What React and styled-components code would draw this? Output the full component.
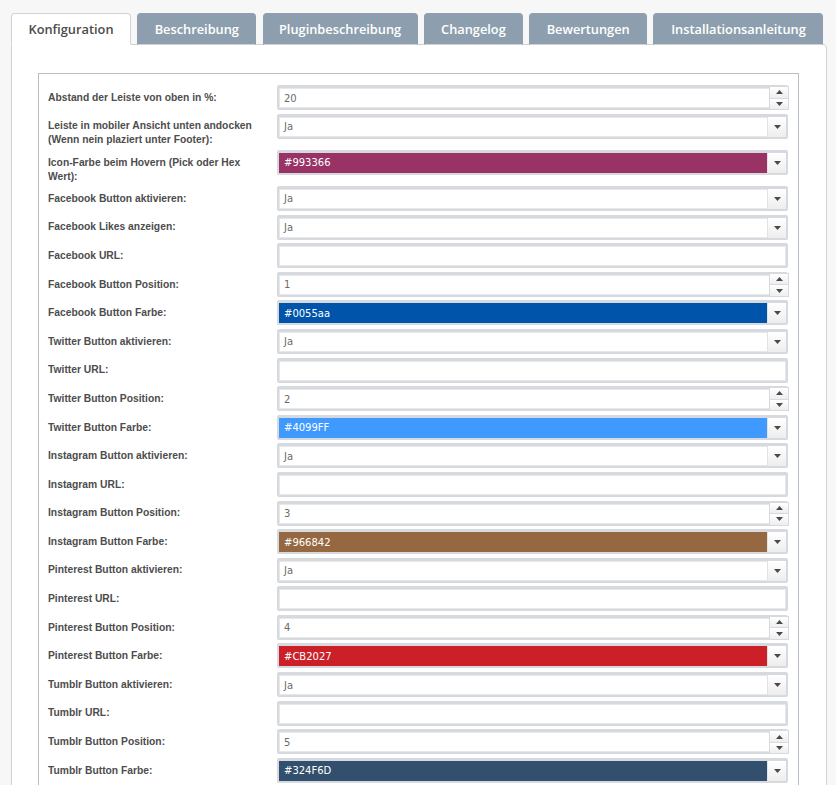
import React from 'react';
import styled, { createGlobalStyle } from 'styled-components';

const tabs = [
	{ name: 'Konfiguration', width: 120 },
	{ name: 'Beschreibung', width: 119 },
	{ name: 'Pluginbeschreibung', width: 155 },
	{ name: 'Changelog', width: 99 },
	{ name: 'Bewertungen', width: 118 },
	{ name: 'Installationsanleitung', width: 170 },
];

const rows = [
	{ label: 'Abstand der Leiste von oben in %:', type: 'number', value: '20' },
	{ label: ['Leiste in mobiler Ansicht unten andocken', '(Wenn nein plaziert unter Footer):'], type: 'select', value: 'Ja' },
	{ label: ['Icon-Farbe beim Hovern (Pick oder Hex', 'Wert):'], type: 'color', value: '#993366' },
	{ label: 'Facebook Button aktivieren:', type: 'select', value: 'Ja' },
	{ label: 'Facebook Likes anzeigen:', type: 'select', value: 'Ja' },
	{ label: 'Facebook URL:', type: 'text', value: '' },
	{ label: 'Facebook Button Position:', type: 'number', value: '1' },
	{ label: 'Facebook Button Farbe:', type: 'color', value: '#0055aa' },
	{ label: 'Twitter Button aktivieren:', type: 'select', value: 'Ja' },
	{ label: 'Twitter URL:', type: 'text', value: '' },
	{ label: 'Twitter Button Position:', type: 'number', value: '2' },
	{ label: 'Twitter Button Farbe:', type: 'color', value: '#4099FF' },
	{ label: 'Instagram Button aktivieren:', type: 'select', value: 'Ja' },
	{ label: 'Instagram URL:', type: 'text', value: '' },
	{ label: 'Instagram Button Position:', type: 'number', value: '3' },
	{ label: 'Instagram Button Farbe:', type: 'color', value: '#966842' },
	{ label: 'Pinterest Button aktivieren:', type: 'select', value: 'Ja' },
	{ label: 'Pinterest URL:', type: 'text', value: '' },
	{ label: 'Pinterest Button Position:', type: 'number', value: '4' },
	{ label: 'Pinterest Button Farbe:', type: 'color', value: '#CB2027' },
	{ label: 'Tumblr Button aktivieren:', type: 'select', value: 'Ja' },
	{ label: 'Tumblr URL:', type: 'text', value: '' },
	{ label: 'Tumblr Button Position:', type: 'number', value: '5' },
	{ label: 'Tumblr Button Farbe:', type: 'color', value: '#324F6D' },
];

const Arrow = ({ up }) => (
	<svg width="7" height="4" viewBox="0 0 7 4">
		<polygon points={up ? '0,4 7,4 3.5,0' : '0,0 7,0 3.5,4'} fill="#4a4a4a" />
	</svg>
);

const Input = ({ type, value }) => (
	<Field>
		<Value $bg={type === 'color' ? value : null}>{value}</Value>
		{(type === 'select' || type === 'color') && (
			<DropButton>
				<Arrow />
			</DropButton>
		)}
		{type === 'number' && (
			<Spinner>
				<SpinHalf><Arrow up /></SpinHalf>
				<SpinHalf><Arrow /></SpinHalf>
			</Spinner>
		)}
	</Field>
);

const App = () => {
	return (
		<Page>
			<GlobalStyle />
			<TabBar>
				{tabs.map((t, i) => (
					<Tab key={t.name} $active={i === 0} $width={t.width}>{t.name}</Tab>
				))}
			</TabBar>
			<Panel>
				<Fieldset>
					{rows.map((r, i) => (
						<Row key={i}>
							<Label>
								{Array.isArray(r.label)
									? r.label.map((l, j) => <span key={j}>{l}</span>)
									: r.label}
							</Label>
							<Input type={r.type} value={r.value} />
						</Row>
					))}
				</Fieldset>
			</Panel>
		</Page>
	);
};

export default App;

// styled components
const GlobalStyle = createGlobalStyle`
	html, body {
		margin: 0;
		padding: 0;
		overflow: hidden;
		background: #f7f7f7;
	}
`;

const Page = styled.div`
	padding: 13px 0 0 11px;
	width: 816px;
`;

const TabBar = styled.div`
	display: flex;
	gap: 6.3px;
	position: relative;
	z-index: 1;
	margin-bottom: -1px;
`;

const Tab = styled.div`
	width: ${(p) => p.$width}px;
	flex: none;
	height: 32px;
	box-sizing: border-box;
	display: flex;
	align-items: center;
	justify-content: center;
	white-space: nowrap;
	font-family: 'Open Sans', sans-serif;
	font-weight: 600;
	font-size: 12.8px;
	border-radius: 4px 4px 0 0;
	color: ${(p) => (p.$active ? '#4b4b4b' : '#fff')};
	background: ${(p) => (p.$active ? '#fff' : '#8d9fae')};
	border: 1px solid ${(p) => (p.$active ? '#d2d2d2' : '#8d9fae')};
	border-bottom: ${(p) => (p.$active ? '1px solid #fff' : '1px solid #d2d2d2')};
`;

const Panel = styled.div`
	background: #fff;
	border: 1px solid #d2d2d2;
	border-radius: 0 4px 0 0;
	padding: 28px 27px 0 26px;
	height: 800px;
`;

const Fieldset = styled.div`
	border: 1px solid #b7bec5;
	padding: 11px 10px 0 9px;
	height: 900px;
`;

const Row = styled.div`
	display: grid;
	grid-template-columns: 229px 1fr;
	align-items: start;
	min-height: 28.6px;
`;

const Label = styled.div`
	font-family: 'Liberation Sans', Arial, sans-serif;
	font-weight: bold;
	font-size: 10.3px;
	line-height: 14px;
	color: #4d4d4d;
	padding: 5.8px 0 2.4px;

	span {
		display: block;
	}
`;

const Field = styled.div`
	display: flex;
	height: 25px;
	box-sizing: border-box;
	border: 2px solid #d6dade;
	border-top-width: 3px;
	border-radius: 2px;
	background: #fff;
	box-shadow: inset 0 0 0 1px #e6e8ea;
`;

const Value = styled.div`
	flex: 1;
	display: flex;
	align-items: center;
	padding-left: 5px;
	font-family: 'DejaVu Sans', Verdana, sans-serif;
	font-size: 10px;
	color: ${(p) => (p.$bg ? '#fff' : '#6b6b6b')};
	background: ${(p) => p.$bg || 'transparent'};
`;

const DropButton = styled.div`
	width: 18px;
	display: flex;
	align-items: center;
	justify-content: center;
	border-left: 1px solid #e3e3e3;
	background: linear-gradient(#ffffff, #ededed);
`;

const Spinner = styled.div`
	width: 18px;
	margin: -2px -3px -2px 0;
	display: flex;
	flex-direction: column;
	border: 1px solid #d6dade;
	background: #fff;
`;

const SpinHalf = styled.div`
	flex: 1;
	display: flex;
	align-items: center;
	justify-content: center;
	background: linear-gradient(#ffffff, #eeeeee);

	& + & {
		border-top: 1px solid #d6dade;
	}
`;
